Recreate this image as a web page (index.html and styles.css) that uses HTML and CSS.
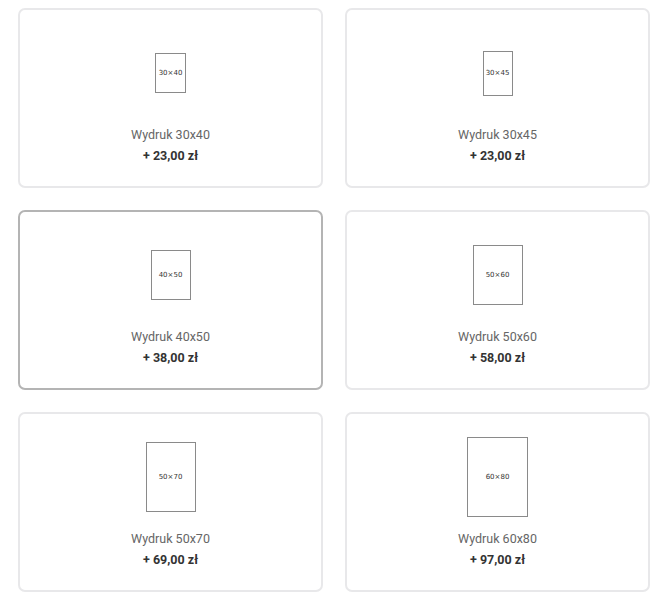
FILE: index.html
```html
<!DOCTYPE html>
<html lang="pl">
  <head>
    <meta charset="UTF-8" />
    <meta name="viewport" content="width=device-width, initial-scale=1.0" />
    <title>Wydruk</title>
    <link rel="stylesheet" href="styles.css">
  </head>
  <body>
    <div class="print-options">
      <div class="print-option">
        <div class="print-option__image"><div class="print-size" style="width: 31px; height: 40px;">30×40</div></div>
        <div class="print-option__name">Wydruk 30x40</div>
        <div class="print-option__price">+ 23,00 zł</div>
      </div>
      <div class="print-option">
        <div class="print-option__image"><div class="print-size" style="width: 30px; height: 45px;">30×45</div></div>
        <div class="print-option__name">Wydruk 30x45</div>
        <div class="print-option__price">+ 23,00 zł</div>
      </div>
      <div class="print-option print-option--active">
        <div class="print-option__image"><div class="print-size" style="width: 40px; height: 50px;">40×50</div></div>
        <div class="print-option__name">Wydruk 40x50</div>
        <div class="print-option__price">+ 38,00 zł</div>
      </div>
      <div class="print-option">
        <div class="print-option__image"><div class="print-size" style="width: 50px; height: 60px;">50×60</div></div>
        <div class="print-option__name">Wydruk 50x60</div>
        <div class="print-option__price">+ 58,00 zł</div>
      </div>
      <div class="print-option">
        <div class="print-option__image"><div class="print-size" style="width: 50px; height: 70px;">50×70</div></div>
        <div class="print-option__name">Wydruk 50x70</div>
        <div class="print-option__price">+ 69,00 zł</div>
      </div>
      <div class="print-option">
        <div class="print-option__image"><div class="print-size" style="width: 61px; height: 80px;">60×80</div></div>
        <div class="print-option__name">Wydruk 60x80</div>
        <div class="print-option__price">+ 97,00 zł</div>
      </div>
    </div>
  </body>
</html>
```

FILE: styles.css
```css
body {
  margin: 0;
  background-color: #fff;
  font-family: Roboto, "Liberation Sans", sans-serif;
}
/* siatka opcji wydruku */
.print-options {
  display: grid;
  grid-template-columns: 305px 305px;
  column-gap: 22px;
  row-gap: 22px;
  padding: 8px 0 0 18px;
}
.print-option {
  box-sizing: border-box;
  height: 180px;
  padding-top: 23px;
  border: 2px solid #e8e8ea;
  border-radius: 7px;
  text-align: center;
}
.print-option--active {
  border-color: #b4b4b4;
}
.print-option__image {
  height: 80px;
  display: flex;
  align-items: center;
  justify-content: center;
}
.print-size {
  box-sizing: border-box;
  display: flex;
  align-items: center;
  justify-content: center;
  border: 1px solid #8a8a8a;
  font-family: "DejaVu Sans", sans-serif;
  font-size: 7px;
  color: #333;
}
.print-option__name {
  margin-top: 12px;
  font-size: 12.5px;
  line-height: 20px;
  color: #666;
}
.print-option__price {
  margin-top: 1px;
  font-size: 12.5px;
  line-height: 20px;
  font-weight: 700;
  color: #333;
}
```
